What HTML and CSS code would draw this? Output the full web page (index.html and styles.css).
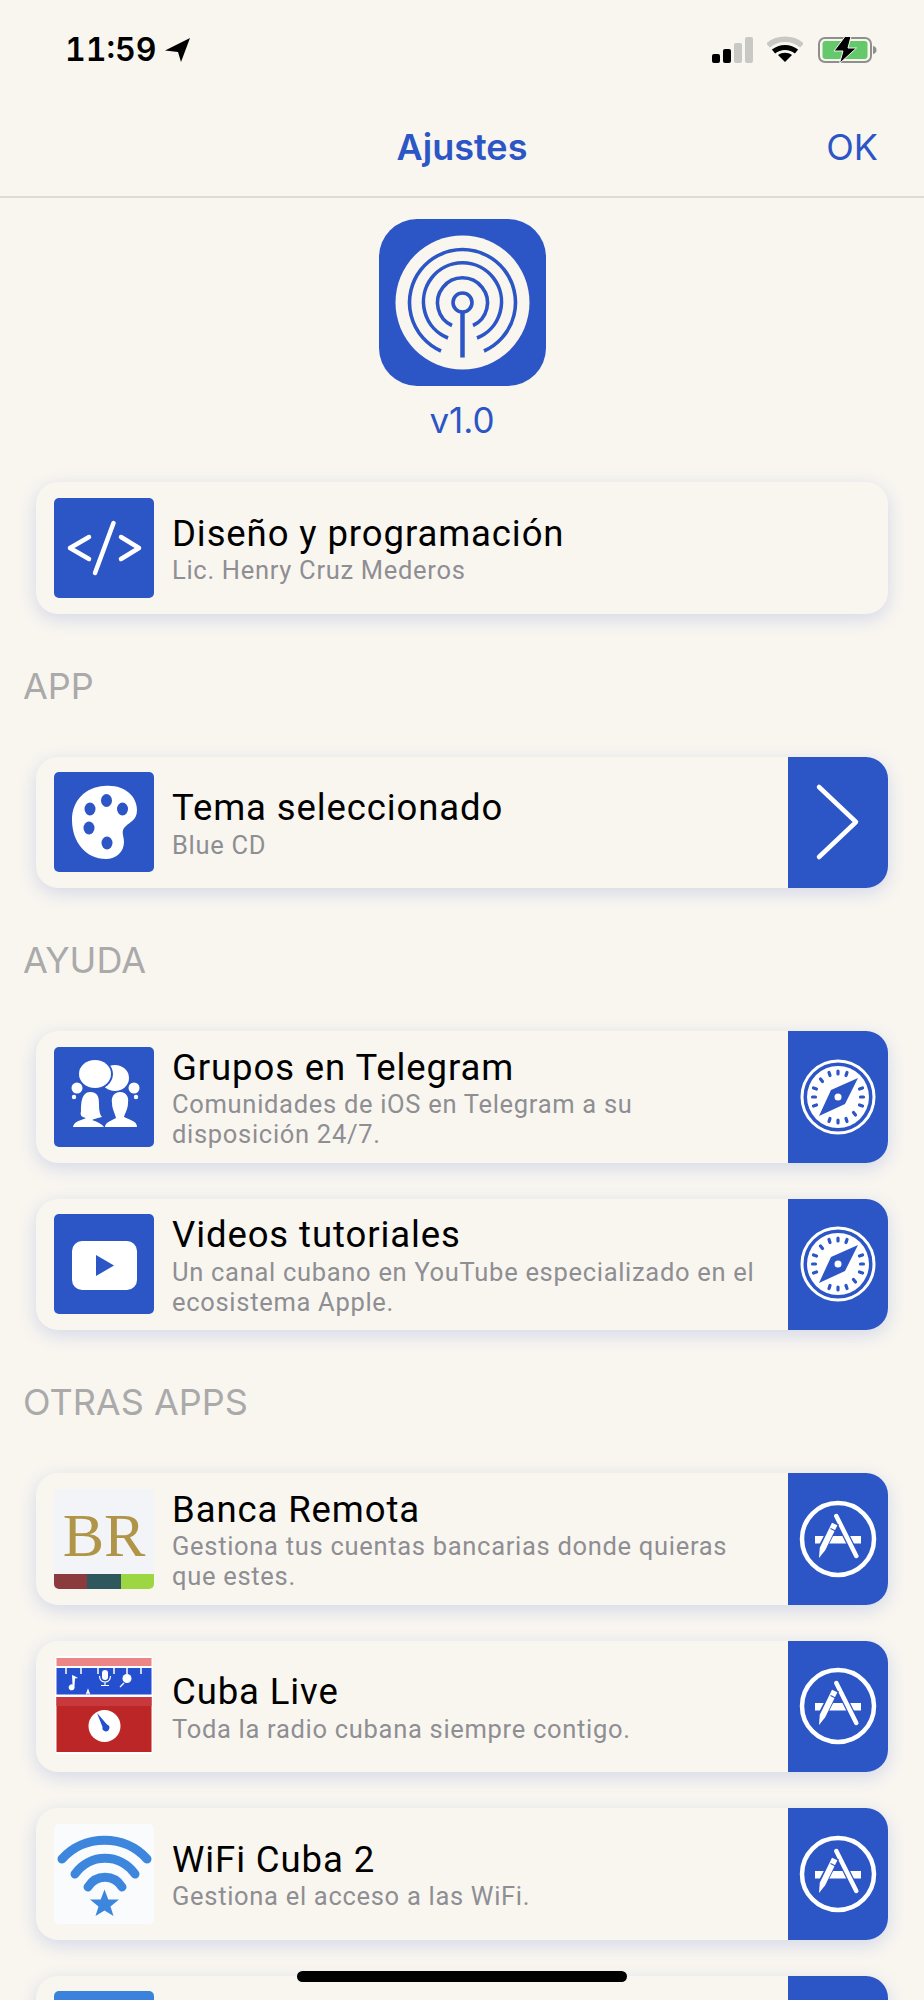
FILE: index.html
```html
<!DOCTYPE html>
<html lang="es">
<head>
    <meta charset="UTF-8">
    <meta name="viewport" content="width=device-width, initial-scale=1.0">
    <title>Ajustes</title>
    <link rel="stylesheet" href="styles.css">
</head>
<body>
    <!-- iconos repetidos -->
    <svg class="icon-defs" width="0" height="0">
        <symbol id="compass" viewBox="0 0 80 80">
            <circle cx="40" cy="40" r="36" fill="none" stroke="#fff" stroke-width="3"/>
            <circle cx="40" cy="40" r="31" fill="#fff"/>
            <g fill="none" stroke="#2c55c6" stroke-width="3.2" stroke-linecap="round">
                <path d="M40 14v3M49 15.500l-1 3M31 15.500l1 3M22.500 22l2 2.500M15.500 31l3 1M64.500 31l-3 1M14.500 40h3M65.500 40h-3M15.500 49l3-1M64.500 49l-3-1M31 64.500l1-3M49 64.500l-1-3M40 66v-3M57.500 58l-2-2.500"/>
            </g>
            <path d="M60 21 47 47 21 59 33 33z" fill="#2c55c6"/>
            <circle cx="40" cy="40" r="3.500" fill="#fff"/>
        </symbol>
        <symbol id="appstore" viewBox="0 0 80 80">
            <circle cx="40" cy="40" r="36" fill="none" stroke="#fff" stroke-width="4.500"/>
            <rect x="17" y="37" width="46" height="7.500" fill="#fff"/>
            <path d="M38.300 17 58.300 57" stroke="#2c55c6" stroke-width="7" fill="none"/>
            <path d="M38.300 17 58.300 57" stroke="#fff" stroke-width="4.500" stroke-linecap="round" fill="none"/>
            <path d="M41 25.500 27 53 19.500 60.500 19.500 49 33.500 22z" fill="#2c55c6"/>
            <path d="M39.400 26.300 27.200 51.300 21 59 21.800 48.700 34 23.700z" fill="#fff"/>
            <path d="M32.500 29.500 38 32.300" stroke="#2c55c6" stroke-width="1.200"/>
        </symbol>
    </svg>

    <div class="status-bar">
        <div class="status-left">
            <span class="time">11:59</span>
            <svg class="location" viewBox="0 0 25 24"><path d="M25 0 16 24 13 14 0 12.500z" fill="#000"/></svg>
        </div>
        <div class="status-right">
            <div class="signal">
                <span class="bar bar-1"></span>
                <span class="bar bar-2"></span>
                <span class="bar bar-3"></span>
                <span class="bar bar-4"></span>
            </div>
            <svg class="wifi" viewBox="0 0 36 26">
                <path d="M1 9.500C10 1 26 1 35 9.500" fill="none" stroke="#c8c8c4" stroke-width="5.500"/>
                <path d="M6.500 15.500C13 10 23 10 29.500 15.500" fill="none" stroke="#000" stroke-width="5"/>
                <path d="M18 26 11 19C15 16 21 16 25 19z" fill="#000"/>
            </svg>
            <svg class="battery" viewBox="0 0 59 28">
                <rect x="1" y="2" width="52" height="24" rx="6" fill="none" stroke="#8f8f8c" stroke-width="2"/>
                <rect x="4.500" y="5" width="45" height="18" rx="3" fill="#63c96a"/>
                <path d="M55 10c2.500.5 3.500 2 3.500 4s-1 3.500-3.500 4z" fill="#8f8f8c"/>
                <path d="M27 .5 16 15h9l-3.500 12.500L38.500 12H30l3-11.500z" fill="#000" stroke="#f9f7f2" stroke-width="1"/>
            </svg>
        </div>
    </div>

    <div class="nav-bar">
        <span class="nav-title">Ajustes</span>
        <span class="nav-ok">OK</span>
    </div>

    <div class="about">
        <div class="app-logo">
            <svg viewBox="0 0 167 167" width="167" height="167">
                <circle cx="83.500" cy="83.500" r="67" fill="#f9f6f0"/>
                <g fill="none" stroke="#2c55c6" stroke-width="3.600">
                    <circle cx="83.500" cy="83.500" r="9.500"/>
                    <path d="M73 106.500A25 25 0 1 1 94 106.500"/>
                    <path d="M69 119A39 39 0 1 1 98 119"/>
                    <path d="M62 132A53 53 0 1 1 105 132"/>
                </g>
                <path d="M83.500 93v45.500" stroke="#2c55c6" stroke-width="4.500"/>
            </svg>
        </div>
        <div class="version">v1.0</div>
    </div>

    <div class="card card-first">
        <div class="card-icon">
            <svg viewBox="0 0 100 100">
                <path d="M35 39 16 50 35 61M67 39 85 50 67 61M59.500 25 41 75" fill="none" stroke="#fff" stroke-width="4.500" stroke-linecap="round" stroke-linejoin="round"/>
            </svg>
        </div>
        <div class="card-text">
            <div class="card-title">Diseño y programación</div>
            <div class="card-sub">Lic. Henry Cruz Mederos</div>
        </div>
    </div>

    <h2 class="section-label">APP</h2>

    <div class="card">
        <div class="card-icon">
            <svg viewBox="0 0 100 100">
                <path d="M50 14C70 12 83 24 83 38 83 48 76 50 72 54 66 59 70 63 70 70 70 80 62 87 52 87 32 87 18 70 18 48 18 28 32 15 50 14Z" fill="#fff"/>
                <g fill="#2c55c6">
                    <ellipse cx="52.500" cy="28.500" rx="5.500" ry="6.500"/>
                    <ellipse cx="36" cy="37" rx="5.500" ry="6.500"/>
                    <ellipse cx="68.500" cy="37" rx="5.500" ry="6.500"/>
                    <ellipse cx="35" cy="56" rx="5.500" ry="6.500"/>
                    <ellipse cx="53" cy="71" rx="5.500" ry="6.500"/>
                </g>
            </svg>
        </div>
        <div class="card-text">
            <div class="card-title">Tema seleccionado</div>
            <div class="card-sub">Blue CD</div>
        </div>
        <div class="card-action">
            <svg class="chevron" viewBox="0 0 46 78">
                <path d="M4 4 41 39 4 74" fill="none" stroke="#fff" stroke-width="4.500" stroke-linecap="round" stroke-linejoin="round"/>
            </svg>
        </div>
    </div>

    <h2 class="section-label">AYUDA</h2>

    <div class="card">
        <div class="card-icon">
            <svg viewBox="0 0 100 100">
                <ellipse cx="61" cy="31" rx="14" ry="13" fill="#fff"/>
                <ellipse cx="41" cy="27" rx="18" ry="16" fill="#2c55c6"/>
                <ellipse cx="41" cy="27" rx="16" ry="14" fill="#fff"/>
                <circle cx="23" cy="41" r="5.500" fill="#fff"/>
                <circle cx="80" cy="41" r="5.500" fill="#fff"/>
                <circle cx="20" cy="50" r="2.200" fill="#fff"/>
                <circle cx="82" cy="50" r="2.200" fill="#fff"/>
                <path d="M36 45C45 45 45 52 45 58 45 64 46 68 48 70 42 71 38 73 38 73 44 75 48 77 50 80H19C20 74 28 73 32 71 27 70 26 68 27 64 27 58 27 45 36 45Z" fill="#fff"/>
                <path d="M66 45C73 45 75 51 74 56 74 62 71 66 70 70 76 73 83 74 83 80H51C51 75 59 73 62 71 61 66 58 62 58 56 57 50 60 45 66 45Z" fill="#fff"/>
            </svg>
        </div>
        <div class="card-text">
            <div class="card-title">Grupos en Telegram</div>
            <div class="card-sub">Comunidades de iOS en Telegram a su disposición 24/7.</div>
        </div>
        <div class="card-action">
            <svg class="action-icon"><use href="#compass"/></svg>
        </div>
    </div>

    <div class="card card-next">
        <div class="card-icon">
            <svg viewBox="0 0 100 100">
                <rect x="18" y="27" width="65" height="49" rx="10" fill="#fff"/>
                <path d="M42 41 60 51.500 42 62z" fill="#2c55c6"/>
            </svg>
        </div>
        <div class="card-text">
            <div class="card-title">Videos tutoriales</div>
            <div class="card-sub">Un canal cubano en YouTube especializado en el ecosistema Apple.</div>
        </div>
        <div class="card-action">
            <svg class="action-icon"><use href="#compass"/></svg>
        </div>
    </div>

    <h2 class="section-label">OTRAS APPS</h2>

    <div class="card">
        <div class="card-icon icon-br">
            <div class="br-mark">BR</div>
            <div class="br-stripes">
                <span class="stripe-red"></span>
                <span class="stripe-teal"></span>
                <span class="stripe-green"></span>
            </div>
        </div>
        <div class="card-text">
            <div class="card-title">Banca Remota</div>
            <div class="card-sub">Gestiona tus cuentas bancarias donde quieras que estes.</div>
        </div>
        <div class="card-action">
            <svg class="action-icon"><use href="#appstore"/></svg>
        </div>
    </div>

    <div class="card card-next">
        <div class="card-icon icon-plain">
            <svg viewBox="0 0 100 100">
                <rect x="1" y="0" width="98" height="98" rx="3" fill="#fff"/>
                <rect x="2.500" y="2" width="95" height="8" fill="#ec8585"/>
                <rect x="2.500" y="12" width="95" height="26.500" fill="#2450d0"/>
                <path d="M12 12v6M27 12v6M44 12v6M60 12v6M73 12v6M87 12v6M32.500 38.500l1.500-4 1.500 4" fill="none" stroke="#fff" stroke-width="1.500"/>
                <path d="M18 19l2.500 1 3.500 2-3 .5-.5 8a3 3 0 1 1-2-2z" fill="#fff"/>
                <rect x="48" y="14" width="6" height="10" rx="3" fill="#fff"/>
                <path d="M45.500 20c0 8 11 8 11 0M51 26v3M47 29.500h8" fill="none" stroke="#fff" stroke-width="1.200"/>
                <circle cx="73" cy="22.500" r="4.500" fill="#fff"/>
                <path d="M70 27l-4 4" stroke="#fff" stroke-width="1.200"/>
                <rect x="2.500" y="41" width="95" height="55" fill="#bc2626"/>
                <rect x="2.500" y="41" width="95" height="9" fill="#c8383c"/>
                <circle cx="50.500" cy="70" r="16" fill="#fff"/>
                <path d="M43 57 53 68.500a3.500 3.500 0 1 1-4.500 2.500z" fill="#2450d0"/>
            </svg>
        </div>
        <div class="card-text">
            <div class="card-title">Cuba Live</div>
            <div class="card-sub">Toda la radio cubana siempre contigo.</div>
        </div>
        <div class="card-action">
            <svg class="action-icon"><use href="#appstore"/></svg>
        </div>
    </div>

    <div class="card card-next">
        <div class="card-icon icon-wifi">
            <svg viewBox="0 0 100 100">
                <g fill="none" stroke="#3c86dd" stroke-width="9" stroke-linecap="round">
                    <path d="M8 35C30 10 71 10 93 35"/>
                    <path d="M21 50C36 29 66 29 81 50"/>
                    <path d="M34 63C42 50 60 50 68 63"/>
                </g>
                <path d="M50.500 65.500 54.300 75.500 65 75.500 56.500 82.500 59.500 92 50.500 86.500 41.500 92 44.500 82.500 36 75.500 46.700 75.500z" fill="#3c86dd"/>
            </svg>
        </div>
        <div class="card-text">
            <div class="card-title">WiFi Cuba 2</div>
            <div class="card-sub">Gestiona el acceso a las WiFi.</div>
        </div>
        <div class="card-action">
            <svg class="action-icon"><use href="#appstore"/></svg>
        </div>
    </div>

    <div class="card card-next">
        <div class="card-icon icon-last"></div>
        <div class="card-text"></div>
        <div class="card-action"></div>
    </div>

    <div class="home-indicator"></div>
</body>
</html>
```

FILE: styles.css
```css
html, body {
    margin: 0;
    padding: 0;
}
body {
    height: 2000px;
    overflow: hidden;
    position: relative;
    background-color: #f9f6f0;
    font-family: Inter, "Liberation Sans", sans-serif;
}
.icon-defs {
    position: absolute;
}

/* status bar */
.status-bar {
    height: 100px;
    display: flex;
    justify-content: space-between;
    align-items: flex-start;
    padding: 0 47px 0 65px;
    box-sizing: border-box;
}
.status-left {
    display: flex;
    align-items: center;
    padding-top: 30px;
}
.time {
    font-size: 32px;
    font-weight: 600;
    line-height: 40px;
    font-variant-numeric: tabular-nums;
    color: #000;
}
.location {
    width: 25px;
    height: 24px;
    margin-left: 9px;
}
.status-right {
    display: flex;
    align-items: flex-start;
    padding-top: 36px;
}
.signal {
    display: flex;
    align-items: flex-end;
    gap: 3px;
    width: 41px;
    height: 27px;
}
.bar {
    width: 8px;
    border-radius: 2px;
    background-color: #000;
}
.bar-1 { height: 9px; }
.bar-2 { height: 14px; }
.bar-3 { height: 20px; background-color: #c8c8c4; }
.bar-4 { height: 26px; background-color: #c8c8c4; }
.wifi {
    width: 36px;
    height: 26px;
    margin-left: 14px;
}
.battery {
    width: 59px;
    height: 28px;
    margin-left: 15px;
}

/* nav */
.nav-bar {
    height: 98px;
    display: flex;
    align-items: center;
    justify-content: center;
    position: relative;
    border-bottom: 2px solid #dddbd6;
    box-sizing: border-box;
    color: #2c55c6;
    font-size: 36px;
    padding-bottom: 2px;
}
.nav-title {
    font-weight: 600;
}
.nav-ok {
    position: absolute;
    right: 46px;
}

.about {
    display: flex;
    flex-direction: column;
    align-items: center;
    padding-top: 21px;
}
.app-logo {
    width: 167px;
    height: 167px;
    border-radius: 38px;
    background-color: #2c55c6;
    overflow: hidden;
}
.app-logo svg {
    display: block;
}
.version {
    margin-top: 14px;
    font-size: 35px;
    line-height: 40px;
    color: #2c55c6;
}

/* cards */
.card {
    display: flex;
    align-items: center;
    height: 131.5px;
    margin: 0 36px;
    border-radius: 22px;
    background-color: #f9f6f0;
    box-shadow: 0 5px 18px rgba(44, 85, 198, 0.18);
    overflow: hidden;
}
.card-first {
    margin-top: 42px;
}
.card-next {
    margin-top: 36px;
}
.card-icon {
    flex: none;
    width: 100px;
    height: 100px;
    margin-left: 18px;
    border-radius: 5px;
    background-color: #2c55c6;
    overflow: hidden;
}
.card-icon svg {
    display: block;
    width: 100px;
    height: 100px;
}
.icon-plain {
    background-color: transparent;
}
.icon-wifi {
    background-color: #f9fbfc;
}
.icon-last {
    background-color: #3b82dc;
}
.icon-br {
    display: flex;
    flex-direction: column;
    background-color: #f3f4f7;
}
.br-mark {
    flex: 1;
    display: flex;
    align-items: center;
    justify-content: center;
    padding-top: 8px;
    font-family: "Liberation Serif", serif;
    font-size: 62px;
    color: #b09548;
}
.br-stripes {
    display: flex;
    height: 15px;
}
.br-stripes span {
    flex: 1;
}
.stripe-red { background-color: #8b3a3e; }
.stripe-teal { background-color: #2f585e; }
.stripe-green { background-color: #9dd643; }

.card-text {
    flex: 1;
    min-width: 0;
    padding: 2px 20px 0 18px;
}
.card-title {
    font-family: Roboto, sans-serif;
    font-size: 36.5px;
    line-height: 42.5px;
    letter-spacing: 0.9px;
    color: #000;
}
.card-sub {
    font-family: Roboto, sans-serif;
    font-size: 25.5px;
    line-height: 30px;
    letter-spacing: 0.7px;
    color: #8e8e93;
}
.card-action {
    flex: none;
    align-self: stretch;
    width: 100px;
    display: flex;
    align-items: center;
    justify-content: center;
    background-color: #2c55c6;
}
.action-icon {
    width: 80px;
    height: 80px;
}
.chevron {
    width: 46px;
    height: 78px;
}

.section-label {
    margin: 0;
    padding: 52px 23px 51px;
    font-size: 36px;
    font-weight: 400;
    line-height: 40px;
    color: #aaaaaa;
}

.home-indicator {
    position: absolute;
    left: 297px;
    top: 1971px;
    width: 330px;
    height: 11px;
    border-radius: 6px;
    background-color: #000;
}
```
